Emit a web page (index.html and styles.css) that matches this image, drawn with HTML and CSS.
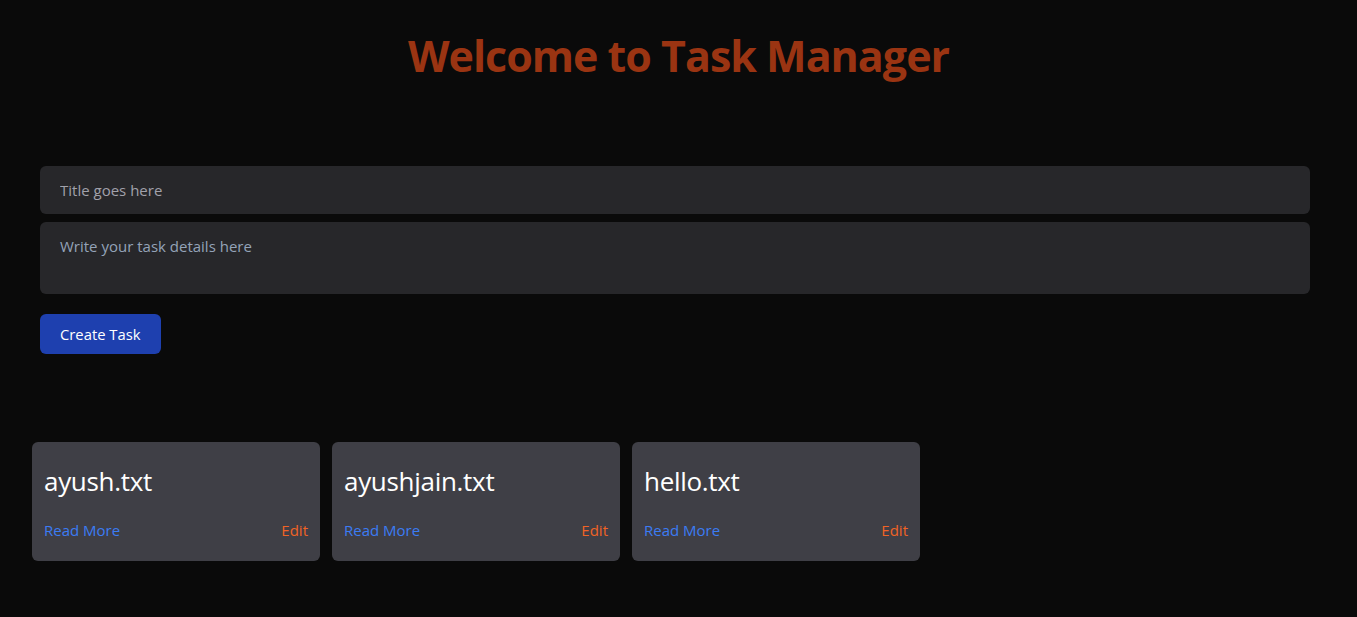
FILE: index.html
```html
<!DOCTYPE html>
<html>
<head>
<meta charset="utf-8">
<link rel="stylesheet" href="styles.css">
</head>
<body>
<h1 class="heading">Welcome to Task Manager</h1>
<form class="task-form">
  <input class="field title-field" type="text" placeholder="Title goes here">
  <textarea class="field details-field" placeholder="Write your task details here"></textarea>
  <button class="create-btn" type="button">Create Task</button>
</form>
<div class="cards">
  <div class="card">
    <h2 class="card-title">ayush.txt</h2>
    <div class="card-actions"><a class="read-more" href="#">Read More</a><a class="edit" href="#">Edit</a></div>
  </div>
  <div class="card">
    <h2 class="card-title">ayushjain.txt</h2>
    <div class="card-actions"><a class="read-more" href="#">Read More</a><a class="edit" href="#">Edit</a></div>
  </div>
  <div class="card">
    <h2 class="card-title">hello.txt</h2>
    <div class="card-actions"><a class="read-more" href="#">Read More</a><a class="edit" href="#">Edit</a></div>
  </div>
</div>
</body>
</html>
```
FILE: styles.css
```css
* { box-sizing: border-box; }
html, body { margin: 0; padding: 0; }
body {
  background: #0a0a0a;
  color: #fff;
  font-family: "Open Sans", "Noto Sans", sans-serif;
  min-height: 617px;
}
.heading {
  margin: 0;
  padding-top: 32px;
  text-align: center;
  font-size: 43px;
  line-height: 48px;
  font-weight: 700;
  color: #9a3412;
  letter-spacing: -1px;
}
.task-form {
  margin: 86px 47px 0 40px;
  display: flex;
  flex-direction: column;
  align-items: flex-start;
}
.field {
  display: block;
  width: 100%;
  background: #27272a;
  border: none;
  outline: none;
  border-radius: 6px;
  color: #fff;
  font-family: inherit;
  font-size: 15px;
  padding: 0 20px;
}
.field::placeholder { color: #a1a1aa; }
.title-field { height: 48px; }
.details-field {
  height: 72px;
  margin-top: 8px;
  padding-top: 14px;
  resize: none;
}
.details-field::placeholder { color: #94a3b8; }
.create-btn {
  margin-top: 20px;
  height: 40px;
  padding: 0 20px;
  background: #1e40af;
  color: #fff;
  border: none;
  border-radius: 6px;
  font-family: inherit;
  font-size: 14.8px;
}
.cards {
  margin-top: 88px;
  padding-left: 32px;
  display: flex;
  gap: 12px;
}
.card {
  width: 288px;
  height: 119px;
  background: #3f3f46;
  border-radius: 6px;
  padding: 12px;
}
.card-title {
  margin: 9px 0 0;
  font-size: 26px;
  line-height: 36px;
  font-weight: 400;
  letter-spacing: -0.3px;
}
.card-actions {
  margin-top: 19px;
  display: flex;
  justify-content: space-between;
  font-size: 15px;
  line-height: 24px;
}
.card-actions a { text-decoration: none; }
.read-more { color: #3b7cf4; }
.edit { color: #f06325; }
```
